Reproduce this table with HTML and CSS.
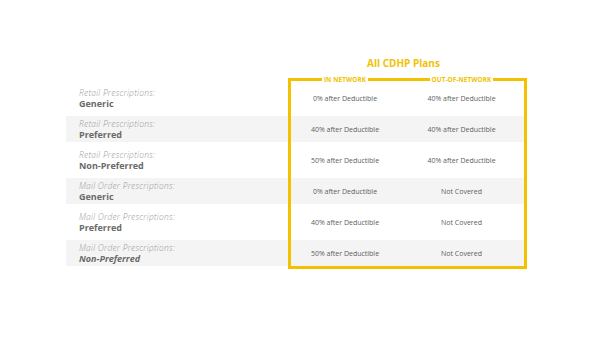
FILE: index.html
```html
<!DOCTYPE html>
<html>
<head>
<meta charset="utf-8">
<link rel="stylesheet" href="styles.css">
</head>
<body>
<div class="page">
  <div class="title">All CDHP Plans</div>
  <div class="labels">
    <div class="lrow"><span class="sub">Retail Prescriptions:</span><span class="main">Generic</span></div>
    <div class="lrow alt"><span class="sub">Retail Prescriptions:</span><span class="main">Preferred</span></div>
    <div class="lrow"><span class="sub">Retail Prescriptions:</span><span class="main">Non-Preferred</span></div>
    <div class="lrow alt"><span class="sub">Mail Order Prescriptions:</span><span class="main">Generic</span></div>
    <div class="lrow"><span class="sub">Mail Order Prescriptions:</span><span class="main">Preferred</span></div>
    <div class="lrow alt"><span class="sub">Mail Order Prescriptions:</span><span class="main italic">Non-Preferred</span></div>
  </div>
  <div class="box">
    <div class="heads"><span class="head">IN NETWORK</span><span class="head">OUT-OF-NETWORK</span></div>
    <div class="drow"><span>0% after Deductible</span><span>40% after Deductible</span></div>
    <div class="drow alt"><span>40% after Deductible</span><span>40% after Deductible</span></div>
    <div class="drow"><span>50% after Deductible</span><span>40% after Deductible</span></div>
    <div class="drow alt"><span>0% after Deductible</span><span>Not Covered</span></div>
    <div class="drow"><span>40% after Deductible</span><span>Not Covered</span></div>
    <div class="drow alt"><span>50% after Deductible</span><span>Not Covered</span></div>
  </div>
</div>
</body>
</html>
```
FILE: styles.css
```css
html, body { margin: 0; padding: 0; background: #fff; }
body { width: 600px; height: 337px; overflow: hidden; font-family: "Open Sans", "DejaVu Sans", sans-serif; }
.page {
  display: grid;
  grid-template-columns: 222px 239px;
  grid-template-rows: 22px auto;
  padding: 56px 0 0 66px;
}
.title {
  grid-column: 2;
  text-align: center;
  color: #f2c200;
  font-weight: 700;
  font-size: 10px;
  line-height: 14px;
  padding-right: 8px;
}
.labels {
  grid-column: 1;
  grid-row: 2;
  padding-top: 7px;
  display: flex;
  flex-direction: column;
  gap: 5px;
}
.lrow {
  height: 26px;
  display: flex;
  flex-direction: column;
  justify-content: center;
  padding-left: 13px;
}
.alt { background: #f4f4f4; }
.sub { font-style: italic; font-weight: 300; color: #9a9a9a; font-size: 8.4px; line-height: 10px; letter-spacing: 0.25px; }
.main { font-weight: 700; color: #6a6a6a; font-size: 9px; line-height: 11px; }
.main.italic { font-style: italic; }
.box {
  grid-column: 2;
  grid-row: 2;
  position: relative;
  border: 3px solid #f2c200;
  padding-top: 4px;
  display: flex;
  flex-direction: column;
  gap: 5px;
}
.heads {
  position: absolute;
  left: 0; right: 0; top: -6px;
  display: grid;
  grid-template-columns: 108px 125px;
}
.head {
  justify-self: center;
  background: #fff;
  color: #f2c200;
  font-weight: 700;
  font-size: 6.4px;
  line-height: 9px;
  padding: 0 2px;
  letter-spacing: 0.1px;
}
.drow {
  height: 26px;
  display: grid;
  grid-template-columns: 108px 125px;
  align-items: center;
  font-size: 7px;
  color: #5e5e5e;
}
.drow span { justify-self: center; }
```
